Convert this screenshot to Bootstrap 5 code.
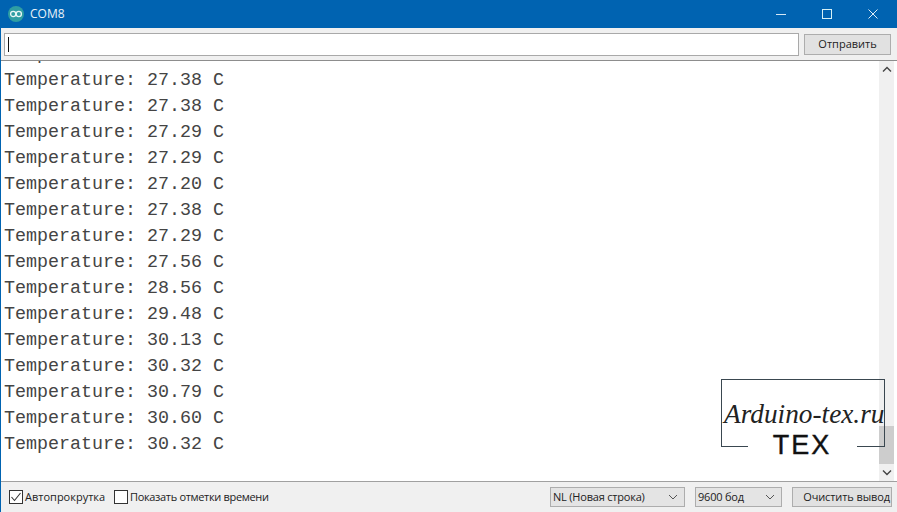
<!DOCTYPE html>
<html lang="ru"><head><meta charset="utf-8"><title>COM8</title>
<link rel="stylesheet" href="https://cdn.jsdelivr.net/npm/bootstrap@5.3.0/dist/css/bootstrap.min.css">
<style>
html,body{height:512px;overflow:hidden;margin:0}
body{font-family:"Open Sans","Noto Sans",sans-serif;font-size:11px;color:#222;background:#f0f0f0}
.win{width:897px;height:512px;border-left:1px solid #0063b1;position:relative}
.tbar{height:28px;background:#0063b1;color:#e8f2fa;padding-left:8px;font-size:12px;margin-left:-1px}
.tbar .ttl{margin-left:6px}
.wbtns{margin-left:auto;margin-right:1px;gap:0}
.wbtn{width:46px;height:28px}
.sendrow{height:33px;padding:5px 6px 0 3px;gap:5px;background:#f0f0f0;border-bottom:1px solid #8d8d8d;box-sizing:border-box}
.inbox{width:796px;height:23px;background:#fff;border:1px solid #a9a9a9;position:relative}
.inbox i{display:block;width:1px;height:15px;background:#111;margin:3px 0 0 3px}
.wbutton{background:#e1e1e1;border:1px solid #adadad;height:21px;color:#222;font-size:11px;padding:0;display:flex;align-items:center;justify-content:center;border-radius:0}
.sendbtn{width:87px;margin-top:1px}
.outwrap{height:420px;background:#fff}
.logview{flex:1;background:#fff;overflow:hidden;font-family:"Liberation Mono",monospace;font-size:18.33px;line-height:26px;color:#444;padding:0 0 23px 3px;white-space:pre;display:flex;flex-direction:column;justify-content:flex-end}
.sb{width:15px;background:#f0f0f0;margin-right:3px;position:relative}
.sbarr{height:17px}
.sbtrack{flex:1;padding-top:348px}
.sbthumb{height:38px;background:#cdcdcd}
.foot{height:31px;border-top:1px solid #a0a0a0;background:#f0f0f0;padding:0 5px 0 8px}
.cb{width:14px;height:14px;border:1px solid #333;background:#fff;flex:none}
.lbl1{width:91px;padding-left:2px;white-space:nowrap;flex:none}
.lbl2{margin-left:2px;white-space:nowrap;flex:none;letter-spacing:-.33px}
.rgrp{margin-left:auto;gap:10px}
.sel{height:20px;background:#e4e4e4;border:1px solid #adadad;padding:0 6px 0 2px;justify-content:space-between;letter-spacing:-.2px}
.sel1{width:135px}
.sel2{width:87px}
.clr{width:100px;height:20px;white-space:nowrap;letter-spacing:-.1px;justify-content:flex-end;padding-right:1px}
.wm{position:absolute;left:719px;top:379px;width:165px;height:90px;pointer-events:none}
.wmbox{position:absolute;left:1px;top:0;width:164px;height:68px;border:1px solid #3a4750;border-bottom:0}
.wmb1,.wmb2{position:absolute;top:67px;height:1px;background:#3a4750;width:27px}
.wmb1{left:1px}.wmb2{left:137px;width:28px}
.wmt{position:absolute;left:4px;top:19px;font-family:"Liberation Serif",serif;font-style:italic;font-size:27.3px;line-height:32px;color:#222;white-space:nowrap}
.wmx{position:absolute;left:50px;top:50px;width:64px;text-align:center;font-family:"Liberation Sans",sans-serif;font-size:27px;letter-spacing:2px;line-height:32px;color:#111;-webkit-text-stroke:.4px #111}
</style></head><body>
<div class="win d-flex flex-column">
<div class="tbar d-flex align-items-center">
<svg width="16" height="16" viewBox="0 0 16 16"><circle cx="8" cy="8" r="8" fill="#2f9ea3"/><g fill="none" stroke="#e8f6f6" stroke-width="1.3"><circle cx="5.2" cy="8" r="2.6"/><circle cx="10.8" cy="8" r="2.6"/></g></svg>
<span class="ttl">COM8</span>
<div class="wbtns d-flex">
<div class="wbtn d-flex align-items-center justify-content-center"><svg width="10" height="10"><path d="M0 5.5h10" stroke="#d5e8f5"/></svg></div>
<div class="wbtn d-flex align-items-center justify-content-center"><svg width="10" height="10"><rect x=".5" y=".5" width="9" height="9" fill="none" stroke="#d5f0f5"/></svg></div>
<div class="wbtn d-flex align-items-center justify-content-center"><svg width="10" height="10"><path d="M.5.5l9 9M9.5.5l-9 9" stroke="#e0eef8"/></svg></div>
</div></div>
<div class="sendrow d-flex">
<div class="inbox"><i></i></div>
<button class="wbutton sendbtn" type="button">Отправить</button>
</div>
<div class="outwrap d-flex">
<div class="logview">Temperature: 27.38 C
Temperature: 27.38 C
Temperature: 27.38 C
Temperature: 27.29 C
Temperature: 27.29 C
Temperature: 27.20 C
Temperature: 27.38 C
Temperature: 27.29 C
Temperature: 27.56 C
Temperature: 28.56 C
Temperature: 29.48 C
Temperature: 30.13 C
Temperature: 30.32 C
Temperature: 30.79 C
Temperature: 30.60 C
Temperature: 30.32 C</div>
<div class="sb d-flex flex-column">
<div class="sbarr d-flex align-items-center justify-content-center"><svg width="10" height="7"><path d="M1 5.5l4-4 4 4" fill="none" stroke="#444" stroke-width="1.4"/></svg></div>
<div class="sbtrack"><div class="sbthumb"></div></div>
<div class="sbarr d-flex align-items-center justify-content-center"><svg width="10" height="7"><path d="M1 1.5l4 4 4-4" fill="none" stroke="#444" stroke-width="1.4"/></svg></div>
</div></div>
<div class="foot d-flex align-items-center">
<span class="cb d-flex align-items-center justify-content-center"><svg width="12" height="12"><path d="M1.5 6l3 3.5 6-7.5" fill="none" stroke="#333" stroke-width="1.1"/></svg></span>
<span class="lbl1">Автопрокрутка</span>
<span class="cb"></span>
<span class="lbl2">Показать отметки времени</span>
<div class="rgrp d-flex align-items-center">
<div class="sel sel1 d-flex align-items-center"><span>NL (Новая строка)</span><svg width="10" height="6"><path d="M1 1l4 4 4-4" fill="none" stroke="#555"/></svg></div>
<div class="sel sel2 d-flex align-items-center"><span>9600 бод</span><svg width="10" height="6"><path d="M1 1l4 4 4-4" fill="none" stroke="#555"/></svg></div>
<button class="wbutton clr" type="button">Очистить вывод</button>
</div></div>
<div class="wm"><div class="wmbox"></div><div class="wmb1"></div><div class="wmb2"></div>
<div class="wmt">Arduino-tex.ru</div><div class="wmx">TEX</div></div>
</div>
</body></html>
